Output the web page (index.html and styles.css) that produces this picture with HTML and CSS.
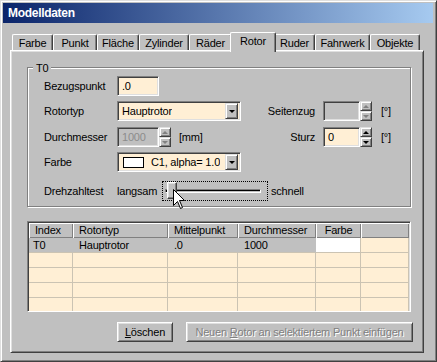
FILE: index.html
```html
<!DOCTYPE html>
<html lang="de">
<head>
    <meta charset="UTF-8">
    <title>Modelldaten</title>
    <link rel="stylesheet" href="styles.css">
</head>
<body>
    <div class="window">
        <div class="titlebar">Modelldaten</div>

        <div class="tabs">
            <div class="tab" style="width:41px">Farbe</div>
            <div class="tab" style="width:44px">Punkt</div>
            <div class="tab" style="width:42px">Fläche</div>
            <div class="tab" style="width:50px">Zylinder</div>
            <div class="tab" style="width:43px">Räder</div>
            <div class="tab active" style="width:46px">Rotor</div>
            <div class="tab" style="width:41px">Ruder</div>
            <div class="tab" style="width:55px">Fahrwerk</div>
            <div class="tab" style="width:50px">Objekte</div>
        </div>

        <div class="panel">
            <div class="group">
                <div class="legend">T0</div>
                <div class="form">
                    <div class="row">
                        <span class="label">Bezugspunkt</span>
                        <div class="edit w42">.0</div>
                    </div>

                    <div class="row">
                        <div class="left">
                            <span class="label">Rotortyp</span>
                            <div class="combo">
                                <span class="combo-text">Hauptrotor</span>
                                <span class="drop"></span>
                            </div>
                        </div>
                        <span class="rlabel">Seitenzug</span>
                        <div class="edit w37 disabled"></div>
                        <div class="spin disabled">
                            <span class="sbtn up"></span>
                            <span class="sbtn down"></span>
                        </div>
                        <span class="unit unit-r">[°]</span>
                    </div>

                    <div class="row row-3">
                        <div class="left">
                            <span class="label">Durchmesser</span>
                            <div class="edit w42 disabled">1000</div>
                            <div class="spin disabled">
                                <span class="sbtn up"></span>
                                <span class="sbtn down"></span>
                            </div>
                            <span class="unit">[mm]</span>
                        </div>
                        <span class="rlabel">Sturz</span>
                        <div class="edit w37">0</div>
                        <div class="spin">
                            <span class="sbtn up"></span>
                            <span class="sbtn down"></span>
                        </div>
                        <span class="unit unit-r">[°]</span>
                    </div>

                    <div class="row">
                        <span class="label">Farbe</span>
                        <div class="combo">
                            <span class="swatch"></span>
                            <span class="combo-text color-text">C1, alpha= 1.0</span>
                            <span class="drop"></span>
                        </div>
                    </div>

                    <div class="row row-5">
                        <span class="label">Drehzahltest</span>
                        <span class="slow">langsam</span>
                        <div class="slider">
                            <div class="track"></div>
                            <div class="thumb"></div>
                            <svg class="cursor" width="13" height="21" viewBox="0 0 13 21">
                                <path d="M0.5 0.5 V16.5 L4.5 12.5 L7.5 19.5 L9.5 18.5 L6.5 11.5 H11.5 Z" fill="#fff" stroke="#000"/>
                            </svg>
                        </div>
                        <span class="fast">schnell</span>
                    </div>
                </div>
            </div>

            <div class="grid">
                <div class="grid-rows">
                    <div class="th">Index</div>
                    <div class="th">Rotortyp</div>
                    <div class="th">Mittelpunkt</div>
                    <div class="th">Durchmesser</div>
                    <div class="th center">Farbe</div>
                    <div class="th"></div>

                    <div class="td sel first">T0</div>
                    <div class="td sel">Hauptrotor</div>
                    <div class="td sel">.0</div>
                    <div class="td sel">1000</div>
                    <div class="td white"></div>
                    <div class="td"></div>

                    <div class="td"></div><div class="td"></div><div class="td"></div><div class="td"></div><div class="td"></div><div class="td"></div>
                    <div class="td"></div><div class="td"></div><div class="td"></div><div class="td"></div><div class="td"></div><div class="td"></div>
                    <div class="td"></div><div class="td"></div><div class="td"></div><div class="td"></div><div class="td"></div><div class="td"></div>
                    <div class="td"></div><div class="td"></div><div class="td"></div><div class="td"></div><div class="td"></div><div class="td"></div>
                </div>
            </div>

            <div class="buttons">
                <div class="btn btn-delete"><span><u>L</u>öschen</span></div>
                <div class="btn btn-add disabled"><span>Neuen <u>R</u>otor an selektiertem Punkt einfügen</span></div>
            </div>
        </div>
    </div>
</body>
</html>
```

FILE: styles.css
```css
* {
    margin: 0;
    padding: 0;
    box-sizing: border-box;
}

body {
    background: #c0c0c0;
    font-family: "Liberation Sans", Arial, sans-serif;
    font-size: 11px;
    letter-spacing: -0.2px;
    color: #000;
}

.window {
    position: relative;
    width: 437px;
    height: 362px;
    padding: 2px 3px 0 2px;
    background: #c0c0c0;
    border: 1px solid;
    border-color: #dfdfdf #404040 #404040 #dfdfdf;
    box-shadow: inset 1px 1px #fff, inset -1px -1px #808080;
}

.titlebar {
    height: 20px;
    padding-left: 5px;
    background: linear-gradient(to right, #0a246a, #a6caf0);
    color: #fff;
    font-weight: bold;
    font-size: 12px;
    line-height: 20px;
    letter-spacing: -0.3px;
}

/* tab strip */
.tabs {
    display: flex;
    align-items: flex-end;
    height: 18px;
    margin: 9px 0 0 9px;
}

.tab {
    height: 16px;
    border: 1px solid;
    border-color: #fff #404040 transparent #fff;
    border-bottom: none;
    border-radius: 2px 2px 0 0;
    box-shadow: inset -1px 0 #808080;
    text-align: center;
    line-height: 16px;
}

.tab.active {
    position: relative;
    z-index: 2;
    height: 20px;
    margin: 0 -2px -2px;
    background: #c0c0c0;
    line-height: 17px;
}

.panel {
    height: 303px;
    margin: 0 9px 0 7px;
    padding: 1px;
    border: 1px solid;
    border-color: #fff #404040 #404040 #fff;
    box-shadow: inset 1px 1px #dfdfdf, inset -1px -1px #808080;
}

/* group box */
.group {
    margin: 15px 11px 0 15px;
    padding: 1px 16px 5px 16px;
    border: 1px solid #808080;
    box-shadow: inset 1px 1px #fff, 1px 1px #fff;
}

.legend {
    width: max-content;
    height: 13px;
    margin: -7px 0 0 -11px;
    padding: 0 3px;
    background: #c0c0c0;
    line-height: 13px;
}

.form {
    display: flex;
    flex-direction: column;
    margin-top: 1px;
}

.row {
    display: flex;
    align-items: center;
    height: 20px;
    margin-bottom: 5px;
}

.row-3 {
    margin-top: 1px;
}

.row-5 {
    margin-top: 4px;
    margin-bottom: 0;
}

.label {
    width: 73px;
    flex-shrink: 0;
}

.left {
    display: flex;
    align-items: center;
    width: 197px;
    flex-shrink: 0;
}

.rlabel {
    width: 74px;
    margin-right: 8px;
    text-align: right;
}

.unit {
    margin-left: 8px;
}

.unit-r {
    margin-left: 9px;
}

/* edits */
.edit {
    height: 20px;
    padding: 0 4px;
    background: #ffefd5;
    border: 1px solid;
    border-color: #808080 #fff #fff #808080;
    box-shadow: inset 1px 1px #404040, inset -1px -1px #dfdfdf;
    line-height: 18px;
}

.edit.disabled {
    background: #c0c0c0;
    color: #8c8c8c;
}

.w42 {
    width: 42px;
}

.w37 {
    width: 37px;
}

.spin {
    display: flex;
    flex-direction: column;
    width: 12px;
    height: 20px;
}

.sbtn {
    display: flex;
    align-items: center;
    justify-content: center;
    height: 10px;
    border: 1px solid;
    border-color: #dfdfdf #404040 #404040 #dfdfdf;
    box-shadow: inset 1px 1px #fff, inset -1px -1px #808080;
    background: #c0c0c0;
}

.sbtn::after {
    content: "";
    border-left: 3px solid transparent;
    border-right: 3px solid transparent;
}

.sbtn.up::after {
    border-bottom: 3px solid #000;
}

.sbtn.down::after {
    border-top: 3px solid #000;
}

.spin.disabled .sbtn.up::after {
    border-bottom-color: #808080;
}

.spin.disabled .sbtn.down::after {
    border-top-color: #808080;
}

/* combo boxes */
.combo {
    display: flex;
    align-items: center;
    width: 124px;
    height: 20px;
    padding: 2px;
    background: #ffefd5;
    border: 1px solid;
    border-color: #808080 #fff #fff #808080;
    box-shadow: inset 1px 1px #404040, inset -1px -1px #dfdfdf;
}

.combo-text {
    padding-left: 2px;
    white-space: nowrap;
    overflow: hidden;
}

.drop {
    display: flex;
    align-items: center;
    justify-content: center;
    flex-shrink: 0;
    width: 13px;
    height: 16px;
    margin-left: auto;
    background: #c0c0c0;
    border: 1px solid;
    border-color: #dfdfdf #404040 #404040 #dfdfdf;
    box-shadow: inset 1px 1px #fff, inset -1px -1px #808080;
}

.drop::after {
    content: "";
    border-left: 3px solid transparent;
    border-right: 3px solid transparent;
    border-top: 3px solid #000;
    margin-top: 1px;
}

.swatch {
    flex-shrink: 0;
    width: 21px;
    height: 11px;
    margin-left: 3px;
    background: #fff;
    border: 1px solid #000;
}

.color-text {
    padding-left: 7px;
}

/* speed slider */
.slow {
    width: 45px;
}

.slider {
    position: relative;
    width: 106px;
    height: 20px;
    border: 1px dotted #000;
}

.track {
    height: 4px;
    margin: 7px 6px 0 2px;
    border: 1px solid;
    border-color: #808080 #fff #fff #808080;
    box-shadow: inset 1px 1px #000;
}

.thumb {
    position: absolute;
    left: 4px;
    top: 0;
    width: 10px;
    height: 17px;
    background: #c0c0c0;
    border: 1px solid;
    border-color: #fff #404040 #404040 #fff;
    box-shadow: inset -1px -1px #808080, inset 1px 1px #dfdfdf;
}

.cursor {
    position: absolute;
    left: 10px;
    top: 7px;
}

.fast {
    margin-left: 3px;
}

/* table */
.grid {
    height: 91px;
    margin: 14px 11px 0 15px;
    padding: 1px;
    overflow: hidden;
    background: #ffefd5;
    border: 1px solid;
    border-color: #808080 #fff #fff #808080;
    box-shadow: inset 1px 1px #404040, inset -1px -1px #dfdfdf;
}

.grid-rows {
    display: grid;
    grid-template-columns: 44px 95px 70px 78px 45px 48px;
    grid-auto-rows: 15px;
}

.th {
    padding-left: 6px;
    background: #c0c0c0;
    box-shadow: inset 1px 1px #fff, inset -1px -1px #808080;
    line-height: 15px;
    white-space: nowrap;
}

.th.center {
    padding-left: 0;
    text-align: center;
}

.td {
    padding-left: 6px;
    background: #ffefd5;
    border-right: 1px solid #cbc3b3;
    border-bottom: 1px solid #cbc3b3;
    line-height: 14px;
    white-space: nowrap;
}

.td.sel {
    background: #c0c0c0;
    border-right-color: #c0c0c0;
}

.td.first {
    padding-left: 4px;
}

.td.white {
    background: #fff;
}

/* buttons */
.buttons {
    display: flex;
    gap: 13px;
    margin: 10px 0 0 105px;
}

.btn {
    display: flex;
    align-items: center;
    justify-content: center;
    height: 20px;
    border: 1px solid;
    border-color: #fff #404040 #404040 #fff;
    box-shadow: inset 1px 1px #dfdfdf, inset -1px -1px #808080;
}

.btn-delete {
    width: 56px;
}

.btn-add {
    width: 227px;
}

.btn.disabled {
    color: #808080;
    text-shadow: 1px 1px #fff;
}
```
